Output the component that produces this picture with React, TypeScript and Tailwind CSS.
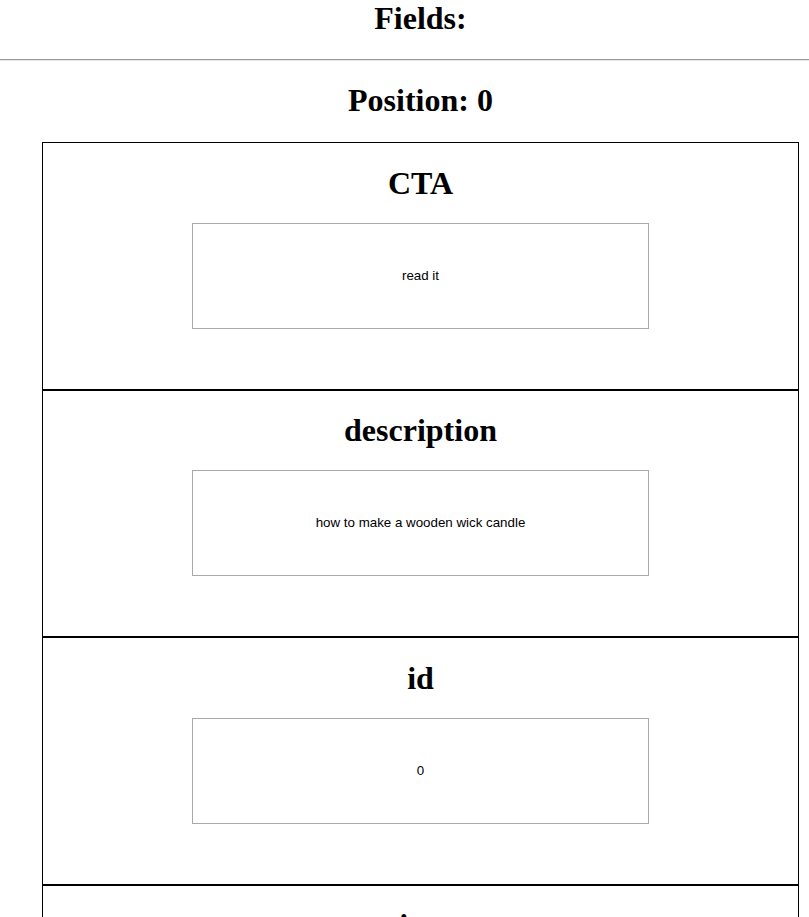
import React from "react";

const fields: { name: string; value: string }[] = [
  { name: "CTA", value: "read it" },
  { name: "description", value: "how to make a wooden wick candle" },
  { name: "id", value: "0" },
  { name: "views", value: "" },
];

export default function App() {
  return (
    <div className="min-h-[917px] bg-white text-black" style={{ fontFamily: '"Liberation Serif", "Times New Roman", serif' }}>
      <div className="ml-[42px] w-[757px]">
        <h1 className="m-0 pt-0 text-center text-[32px] font-bold leading-[37px]">Fields:</h1>
      </div>
      <div className="mt-[22px] h-[2px] w-full border-t border-b border-t-[#9a9a9a] border-b-[#e6e6e6]" />
      <div className="ml-[42px] w-[757px]">
        <h1 className="mt-[21px] text-center text-[32px] font-bold leading-[37px]">Position: 0</h1>
      </div>
      <div className="ml-[42px] mt-[23px] w-[757px]">
        {fields.map((f) => (
          <div key={f.name} className="flex h-[247.5px] flex-col items-center border border-black pt-[21.5px]">
            <h1 className="text-center text-[32px] font-bold leading-[37px]">{f.name}</h1>
            <div
              className="mt-[21px] flex h-[106px] w-[457px] items-center justify-center border border-[#a9a9a9] text-[13.333px] text-black"
              style={{ fontFamily: '"Liberation Sans", Arial, sans-serif' }}
            >
              {f.value}
            </div>
          </div>
        ))}
      </div>
    </div>
  );
}
